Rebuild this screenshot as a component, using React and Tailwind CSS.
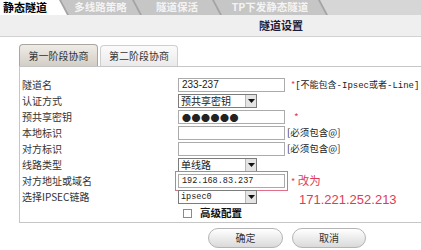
import React from 'react';

const topTabs = ['多线路策略', '隧道保活', 'TP下发静态隧道'];
const topTabWidths = ['w-[79px]', 'w-[86px]', 'w-[112px]'];

const Arrow = () => (
  <span className="flex h-[12px] w-[11px] shrink-0 items-center justify-center border-l border-[#b8b8b8] bg-[#e4e4e4]">
    <svg width="7" height="4" viewBox="0 0 7 4">
      <polygon points="0,0 7,0 3.5,4" fill="#111" />
    </svg>
  </span>
);

const Select = ({ value, mono }) => (
  <div className="flex h-[14px] w-[79px] items-center border border-[#7c7c7c] bg-white">
    <span className={`flex-1 pl-[2px] leading-none ${mono ? "font-['Liberation_Mono'] text-[8.5px]" : 'text-[10px]'}`}>{value}</span>
    <Arrow />
  </div>
);

const Input = ({ value, className = '', highlight }) => (
  <div
    className={`flex h-[14px] w-[107px] items-center border border-[#ababab] bg-white pl-[3px] leading-none ${
      highlight ? 'outline outline-[1.5px] outline-offset-[2px] outline-[#e0708a]' : ''
    } ${className}`}
  >
    {value}
  </div>
);

const Row = ({ label, children, note }) => (
  <div className="flex h-[16px] items-center">
    <div className="w-[156px] shrink-0 text-[10px] leading-none text-[#333]">{label}</div>
    <div className="w-[107px] shrink-0">{children}</div>
    {note}
  </div>
);

export default function App() {
  return (
    <div className="h-[250px] w-[421px] overflow-hidden bg-white font-['Noto_Sans_CJK_SC',sans-serif] text-[#222]">
      {/* top tabs */}
      <div className="flex h-[15px] bg-[#a4a4a4]">
        <div className="flex w-[67px] shrink-0 items-center bg-white pl-[3px] text-[11px] font-bold leading-none text-black [clip-path:polygon(0_0,59px_0,67px_100%,0_100%)]">
          静态隧道
        </div>
        {topTabs.map((t, i) => (
          <div
            key={t}
            className={`-ml-[6px] flex ${topTabWidths[i]} shrink-0 items-center justify-center bg-[#c6c6c6] text-[10.5px] font-bold leading-none text-[#f4f4f4] [clip-path:polygon(0_0,calc(100%-8px)_0,100%_100%,8px_100%)]`}
          >
            {t}
          </div>
        ))}
        <div className="-ml-[6px] flex-1 bg-[#d6d6d6] [clip-path:polygon(0_0,100%_0,100%_100%,8px_100%)]" />
      </div>

      {/* header band */}
      <div className="flex h-[22px] items-center border-b border-[#d2d2d2] bg-[#efefef] pl-[259px] text-[11px] font-bold leading-none text-[#1c1c3c]">
        隧道设置
      </div>

      {/* sub tabs */}
      <div className="mt-[7px] flex h-[22px] items-end gap-[2px] pl-[19px]">
        <div className="flex h-[22px] w-[79px] items-center justify-center rounded-t-[4px] border border-b-0 border-[#a9a6a0] bg-gradient-to-b from-[#efece7] to-[#d3cec5] text-[10px] leading-none text-[#333]">
          第一阶段协商
        </div>
        <div className="flex h-[21px] w-[78px] items-center justify-center rounded-t-[4px] border border-b-0 border-[#cfcfcf] bg-gradient-to-b from-[#fbfbfb] to-[#eaeaea] text-[10px] leading-none text-[#333]">
          第二阶段协商
        </div>
      </div>

      {/* panel */}
      <div className="ml-[19px] w-[420px] border border-[#c6c6c6] pb-[1px] pl-[2px] pt-[10px]">
        <Row
          label="隧道名"
          note={
            <span className="ml-[6px] whitespace-nowrap text-[9px] leading-none">
              <span className="text-[#dc3c5a]">*</span>
              <span className="font-['Liberation_Mono','Noto_Sans_CJK_SC',monospace]">[不能包含-Ipsec或者-Line]</span>
            </span>
          }
        >
          <Input value="233-237" className="font-['Liberation_Sans'] text-[10px]" />
        </Row>
        <Row label="认证方式">
          <Select value="预共享密钥" />
        </Row>
        <Row label="预共享密钥" note={<span className="ml-[9px] text-[10px] leading-none text-[#dc3c5a]">*</span>}>
          <Input value="●●●●●●" className="text-[9px] tracking-[0.5px]" />
        </Row>
        <Row label="本地标识" note={<span className="ml-[2px] text-[9.5px] leading-none">[必须包含@]</span>}>
          <Input value="" />
        </Row>
        <Row label="对方标识" note={<span className="ml-[2px] text-[9.5px] leading-none">[必须包含@]</span>}>
          <Input value="" />
        </Row>
        <Row label="线路类型">
          <Select value="单线路" />
        </Row>
        <Row
          label="对方地址或域名"
          note={
            <span className="ml-[6px] whitespace-nowrap text-[11.5px] leading-none text-[#dc3c5a]">
              <span className="text-[9px]">*</span> 改为
            </span>
          }
        >
          <Input value="192.168.83.237" highlight className="font-['Liberation_Mono'] text-[8.5px]" />
        </Row>
        <Row
          label="选择IPSEC链路"
          note={
            <span className="ml-[14px] mt-[4px] font-['Liberation_Sans'] text-[13px] leading-none text-[#dc3c5a]">
              171.221.252.213
            </span>
          }
        >
          <Select value="ipsec0" mono />
        </Row>
        <Row label="">
          <div className="flex items-center pl-[5px]">
            <span className="h-[9px] w-[9px] border border-[#8a8a8a] bg-white" />
            <span className="ml-[8px] text-[10.5px] font-bold leading-none text-[#111]">高级配置</span>
          </div>
        </Row>
      </div>

      {/* buttons */}
      <div className="mt-[5px] flex gap-[9px] pl-[208px]">
        <button className="h-[20px] w-[75px] rounded-full border border-[#b4b4b4] bg-gradient-to-b from-white to-[#dadada] text-[10px] leading-none text-[#333]">
          确定
        </button>
        <button className="h-[20px] w-[74px] rounded-full border border-[#b4b4b4] bg-gradient-to-b from-white to-[#dadada] text-[10px] leading-none text-[#333]">
          取消
        </button>
      </div>
    </div>
  );
}
